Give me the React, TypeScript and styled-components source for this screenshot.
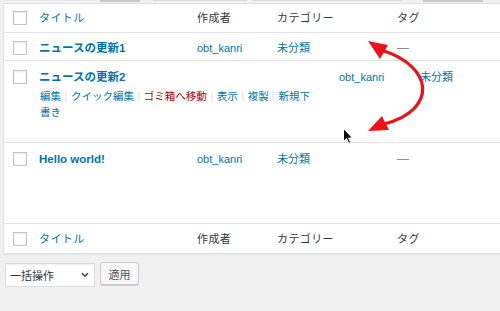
import React from "react";
import styled, { createGlobalStyle } from "styled-components";

const GlobalStyle = createGlobalStyle`
  html, body { margin: 0; padding: 0; background: #f1f1f1; }
  body {
    font-family: "Liberation Sans", "Noto Sans CJK JP", sans-serif;
    font-size: 11px;
    color: #32373c;
  }
  * { box-sizing: border-box; }
`;

const Page = styled.div`
  position: relative;
  width: 500px;
  height: 311px;
  overflow: hidden;
  padding-left: 3px;
`;

const TopStrip = styled.div`
  display: flex;
  align-items: flex-start;
  height: 3px;
`;

const StripPiece = styled.div<{ $w: number; $ml: number; $c: string; $h: number }>`
  flex: none;
  width: ${(p) => p.$w}px;
  margin-left: ${(p) => p.$ml}px;
  height: ${(p) => p.$h}px;
  background: ${(p) => p.$c};
`;

const Table = styled.div`
  width: 530px;
  background: #fff;
  border: 1px solid #e1e1e1;
  box-shadow: 0 1px 1px rgba(0, 0, 0, 0.04);
`;

const Row = styled.div<{ $h: number; $cols: string; $head?: boolean; $pt?: number; $last?: boolean }>`
  display: grid;
  grid-template-columns: ${(p) => p.$cols};
  height: ${(p) => p.$h}px;
  align-items: ${(p) => (p.$head ? "center" : "start")};
  padding-top: ${(p) => (p.$head ? 0 : p.$pt ?? 8)}px;
  border-bottom: ${(p) => (p.$last ? "none" : "1px solid #e1e1e1")};
`;

const CheckCell = styled.div<{ $head?: boolean }>`
  padding-left: 9px;
  display: flex;
  padding-top: ${(p) => (p.$head ? 0 : 1)}px;
`;

const Checkbox = styled.span`
  display: block;
  width: 14px;
  height: 14px;
  border: 1px solid #c3c4c7;
  background: #fff;
  box-shadow: inset 0 1px 2px rgba(0, 0, 0, 0.08);
`;

const HeadText = styled.div<{ $link?: boolean }>`
  line-height: 16px;
  font-size: 11px;
  color: ${(p) => (p.$link ? "#0073aa" : "#32373c")};
  letter-spacing: 0.4px;
`;

const TitleCell = styled.div<{ $pr?: number }>`
  padding-right: ${(p) => p.$pr ?? 10}px;
  min-width: 0;
`;

const PostTitle = styled.div`
  font-size: 11.5px;
  font-weight: 700;
  line-height: 16px;
  color: #0073aa;
`;

const RowActions = styled.div`
  margin-top: 3px;
  font-size: 10.5px;
  line-height: 16px;
  color: #0073aa;
  padding-left: 1px;
`;

const Action = styled.span<{ $danger?: boolean }>`
  color: ${(p) => (p.$danger ? "#a00" : "#0073aa")};
`;

const Sep = styled.span`
  margin: 0 3.6px;
  color: #ddd;
  font-family: "Liberation Sans", sans-serif;
`;

const LinkText = styled.div`
  line-height: 16px;
  font-size: 11px;
  color: #0073aa;
`;

const Dash = styled.div`
  line-height: 16px;
  font-size: 12px;
  color: #8c8f94;
`;

const Bulk = styled.div`
  display: flex;
  align-items: flex-start;
  gap: 5px;
  margin-top: 8px;
  padding-left: 2px;
`;

const SelectBox = styled.div`
  margin-top: 1px;
  width: 90px;
  height: 24px;
  background: #fff;
  border: 1px solid #ddd;
  box-shadow: inset 0 1px 2px rgba(0, 0, 0, 0.07);
  display: flex;
  align-items: center;
  justify-content: space-between;
  padding: 0 5px 0 4px;
  font-size: 11px;
  color: #32373c;
`;

const ApplyButton = styled.div`
  width: 39px;
  height: 23px;
  background: #f7f7f7;
  border: 1px solid #ccc;
  border-radius: 3px;
  box-shadow: 0 1px 0 #ccc;
  display: flex;
  align-items: center;
  justify-content: center;
  font-size: 11px;
  color: #555;
`;

const Overlay = styled.svg`
  position: absolute;
  left: 0;
  top: 0;
  pointer-events: none;
`;

const COLS = "35px 158px 80px 120px 1fr";
const COLS2 = "35px 300px 81px 1fr";

const HeaderRow: React.FC<{ last?: boolean }> = ({ last }) => (
  <Row $h={29} $cols={COLS} $head $last={last}>
    <CheckCell $head>
      <Checkbox />
    </CheckCell>
    <HeadText $link>タイトル</HeadText>
    <HeadText>作成者</HeadText>
    <HeadText>カテゴリー</HeadText>
    <HeadText>タグ</HeadText>
  </Row>
);

export default function App() {
  return (
    <>
      <GlobalStyle />
      <Page>
        <TopStrip>
          <StripPiece $w={94} $ml={0} $c="#e6e6e6" $h={1} />
          <StripPiece $w={40} $ml={3} $c="#c9c9c9" $h={2} />
          <StripPiece $w={94} $ml={13} $c="#dadada" $h={1} />
          <StripPiece $w={150} $ml={5} $c="#dadada" $h={1} />
          <StripPiece $w={60} $ml={21} $c="#c9c9c9" $h={2} />
        </TopStrip>
        <Table>
          <HeaderRow />
          <Row $h={28} $cols={COLS} $pt={7}>
            <CheckCell>
              <Checkbox />
            </CheckCell>
            <TitleCell>
              <PostTitle>ニュースの更新1</PostTitle>
            </TitleCell>
            <LinkText>obt_kanri</LinkText>
            <LinkText>未分類</LinkText>
            <Dash>—</Dash>
          </Row>
          <Row $h={82} $cols={COLS2} $pt={8}>
            <CheckCell>
              <Checkbox />
            </CheckCell>
            <TitleCell $pr={20}>
              <PostTitle>ニュースの更新2</PostTitle>
              <RowActions>
                <Action>編集</Action>
                <Sep>|</Sep>
                <Action>クイック編集</Action>
                <Sep>|</Sep>
                <Action $danger>ゴミ箱へ移動</Action>
                <Sep>|</Sep>
                <Action>表示</Action>
                <Sep>|</Sep>
                <Action>複製</Action>
                <Sep>|</Sep>
                <Action>新規下</Action>
                <Action>書き</Action>
              </RowActions>
            </TitleCell>
            <LinkText>obt_kanri</LinkText>
            <LinkText>未分類</LinkText>
          </Row>
          <Row $h={81} $cols={COLS} $pt={8}>
            <CheckCell>
              <Checkbox />
            </CheckCell>
            <TitleCell>
              <PostTitle>Hello world!</PostTitle>
            </TitleCell>
            <LinkText>obt_kanri</LinkText>
            <LinkText>未分類</LinkText>
            <Dash>—</Dash>
          </Row>
          <HeaderRow last />
        </Table>
        <Bulk>
          <SelectBox>
            <span>一括操作</span>
            <svg width="8" height="6" viewBox="0 0 8 6">
              <path d="M1 1.2 L4 4.2 L7 1.2" fill="none" stroke="#444" strokeWidth="1.6" />
            </svg>
          </SelectBox>
          <ApplyButton>適用</ApplyButton>
        </Bulk>
        <Overlay width="500" height="311" viewBox="0 0 500 311">
          <path
            d="M381 50 C 434 66, 438 110, 384 124"
            fill="none"
            stroke="#e8141a"
            strokeWidth="3.2"
            strokeLinecap="round"
          />
          <polygon points="368,41 388,45 380,59" fill="#e8141a" />
          <polygon points="368,131 382,116 389,130" fill="#e8141a" />
          <g transform="translate(343.5,128.5) scale(0.85)">
            <path
              d="M0 0 L0 15.5 L3.6 12 L6.2 17.6 L8.6 16.6 L6 11.2 L11 11.2 Z"
              fill="#000"
              stroke="#fff"
              strokeWidth="1.2"
              strokeLinejoin="round"
            />
          </g>
        </Overlay>
      </Page>
    </>
  );
}
